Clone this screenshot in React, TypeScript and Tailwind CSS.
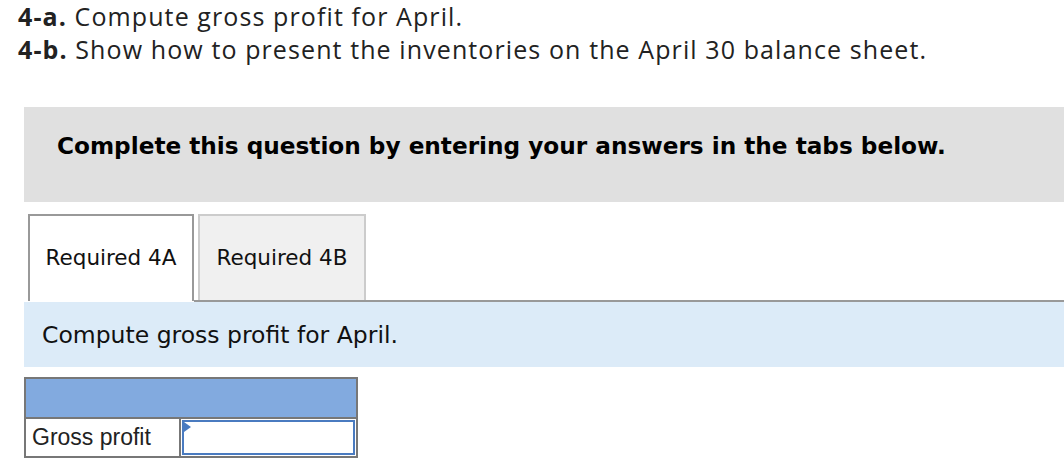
export default function App() {
  return (
    <div className="w-[1064px] h-[476px] overflow-hidden bg-white text-[#222]">
      <div className="pl-[18px] text-[25px] leading-[33px] tracking-[1.1px] font-['Open_Sans',sans-serif]">
        <p>
          <span className="font-bold">4-a.</span> Compute gross profit for April.
        </p>
        <p>
          <span className="font-bold">4-b.</span> Show how to present the inventories on the April 30 balance sheet.
        </p>
      </div>

      <div className="ml-[24px] mt-[41px] h-[95px] bg-[#e0e0e0] pl-[33px] pt-[25px]">
        <p className="font-['DejaVu_Sans',sans-serif] text-[23.2px] leading-[28px] font-bold text-black">
          Complete this question by entering your answers in the tabs below.
        </p>
      </div>

      <div className="ml-[28px] mt-[12px] flex font-['DejaVu_Sans',sans-serif] text-[21.5px] text-[#111]">
        <div className="relative z-10 -mb-[2px] flex h-[87px] w-[166px] items-center justify-center border-2 border-b-0 border-[#999] bg-white">
          Required 4A
        </div>
        <div className="flex flex-1 border-b-2 border-[#999]">
          <div className="ml-[4px] flex h-[86px] w-[168px] items-center justify-center border-2 border-b-0 border-[#ccc] bg-[#f0f0f0]">
            Required 4B
          </div>
        </div>
      </div>

      <div className="ml-[24px] flex h-[65px] items-center bg-[#dcebf8] pl-[18px] pt-[3px] font-['DejaVu_Sans',sans-serif] text-[23.5px] text-[#111]">
        Compute gross profit for April.
      </div>

      <div className="ml-[24px] mt-[10px] w-[334px] border-2 border-[#777] font-['Liberation_Sans',sans-serif]">
        <div className="h-[40px] border-b-2 border-[#777] bg-[#82aadf]" />
        <div className="flex h-[37px]">
          <div className="flex w-[155px] items-center border-r-2 border-[#777] pl-[6px] text-[23px] text-[#222]">
            Gross profit
          </div>
          <div className="relative flex-1 p-[1px]">
            <div className="h-full w-full border-2 border-[#4a7bc0] bg-white" />
            <div className="absolute left-[3px] top-[3px] h-0 w-0 border-y-[5px] border-l-[7px] border-y-transparent border-l-[#4a7bc0]" />
          </div>
        </div>
      </div>
    </div>
  );
}
